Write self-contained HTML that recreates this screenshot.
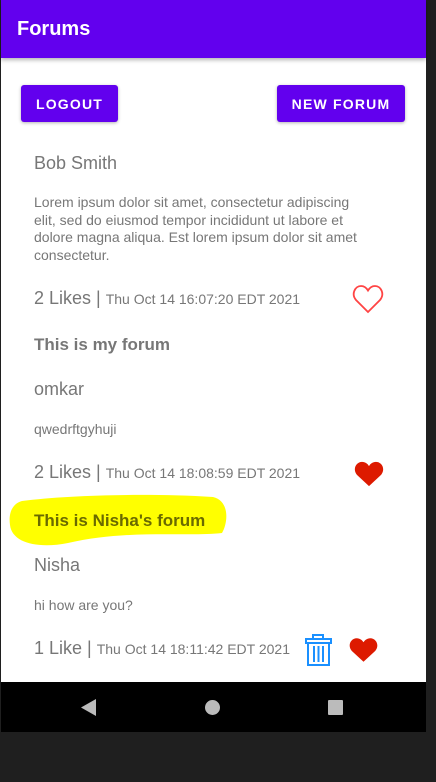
<!DOCTYPE html>
<html><head><meta charset="utf-8"><style>
*{margin:0;padding:0;box-sizing:border-box}
body{width:436px;height:782px;background:#1f1f1f;position:relative;overflow:hidden;font-family:"Liberation Sans",Roboto,sans-serif}
.phone{position:absolute;left:1px;top:0;width:425px;height:682px;background:#fff}
.bar{position:absolute;left:0;top:0;width:425px;height:58px;background:#6200ee;box-shadow:0 2px 4px rgba(0,0,0,.3)}
.bar span{position:absolute;left:16px;top:18px;color:#fff;font-size:20px;font-weight:bold}
.btn{position:absolute;top:85px;height:37px;background:#6200ee;color:#fff;font-size:14px;font-weight:bold;letter-spacing:1.2px;border-radius:3px;display:flex;align-items:center;justify-content:center;box-shadow:0 1px 3px rgba(0,0,0,.3)}
.t{position:absolute;left:34px;color:#777;white-space:nowrap}
.nav{position:absolute;left:1px;top:682px;width:425px;height:50px;background:#000}
</style></head><body>
<div class="phone">
<div class="bar"><span>Forums</span></div>
<div class="btn" style="left:20px;width:97px">LOGOUT</div>
<div class="btn" style="left:276px;width:128px">NEW FORUM</div>
</div>
<div class="t" style="top:153px;font-size:18px">Bob Smith</div>
<div class="t" style="top:194px;font-size:14px;line-height:17.5px;white-space:normal;width:338px">Lorem ipsum dolor sit amet, consectetur adipiscing elit, sed do eiusmod tempor incididunt ut labore et dolore magna aliqua. Est lorem ipsum dolor sit amet consectetur.</div>
<div class="t" style="top:288px;font-size:18px">2 Likes | <span style="font-size:14px">Thu Oct 14 16:07:20 EDT 2021</span></div>
<svg style="position:absolute;left:352px;top:284px" width="32" height="30" viewBox="0 0 32 30"><path d="M16 28 L4 16 C-1 10 3 2 9 2 C12 2 14.5 4 16 6.5 C17.5 4 20 2 23 2 C29 2 33 10 28 16 Z" fill="none" stroke="#f44" stroke-width="1.8"/></svg>
<div class="t" style="top:335px;font-size:17px;font-weight:bold">This is my forum</div>
<div class="t" style="top:379px;font-size:18px">omkar</div>
<div class="t" style="top:421px;font-size:14px">qwedrftgyhuji</div>
<div class="t" style="top:462px;font-size:18px">2 Likes | <span style="font-size:14px">Thu Oct 14 18:08:59 EDT 2021</span></div>
<svg style="position:absolute;left:354px;top:461px" width="30" height="26" viewBox="0 0 32 28"><path d="M16 27 L3 15 C-2 9 2 1 8.5 1 C12 1 14.5 3 16 5.5 C17.5 3 20 1 23.5 1 C30 1 34 9 29 15 Z" fill="#dd1a00"/></svg>
<svg style="position:absolute;left:8px;top:493px" width="220" height="56" viewBox="0 0 220 56"><path d="M14 8 C60 2 140 0 205 4 C222 8 220 30 214 40 C180 44 120 36 60 50 C30 56 4 50 2 32 C0 18 6 10 14 8 Z" fill="#ffff00"/></svg>
<div class="t" style="top:511px;font-size:17px;font-weight:bold;color:#6a6a00">This is Nisha's forum</div>
<div class="t" style="top:555px;font-size:18px">Nisha</div>
<div class="t" style="top:597px;font-size:14px">hi how are you?</div>
<div class="t" style="top:638px;font-size:18px">1 Like | <span style="font-size:14px">Thu Oct 14 18:11:42 EDT 2021</span></div>
<svg style="position:absolute;left:305px;top:634px" width="27" height="32" viewBox="0 0 27 32"><g fill="none" stroke="#1a90ff" stroke-width="2"><rect x="8" y="1" width="10" height="4"/><rect x="1" y="5" width="25" height="4"/><path d="M3 9 V31 H24 V9"/><path d="M9 12 V28 M13.5 12 V28 M18 12 V28"/></g></svg>
<svg style="position:absolute;left:349px;top:637px" width="29" height="26" viewBox="0 0 32 28"><path d="M16 27 L3 15 C-2 9 2 1 8.5 1 C12 1 14.5 3 16 5.5 C17.5 3 20 1 23.5 1 C30 1 34 9 29 15 Z" fill="#dd1a00"/></svg>
<div class="nav">
<svg style="position:absolute;left:80px;top:17px" width="16" height="17"><path d="M15 0 V17 L0 8.5 Z" fill="#bbb"/></svg>
<div style="position:absolute;left:204px;top:18px;width:15px;height:15px;border-radius:50%;background:#bbb"></div>
<div style="position:absolute;left:327px;top:18px;width:15px;height:15px;background:#bbb;border-radius:1px"></div>
</div>
</body></html>
